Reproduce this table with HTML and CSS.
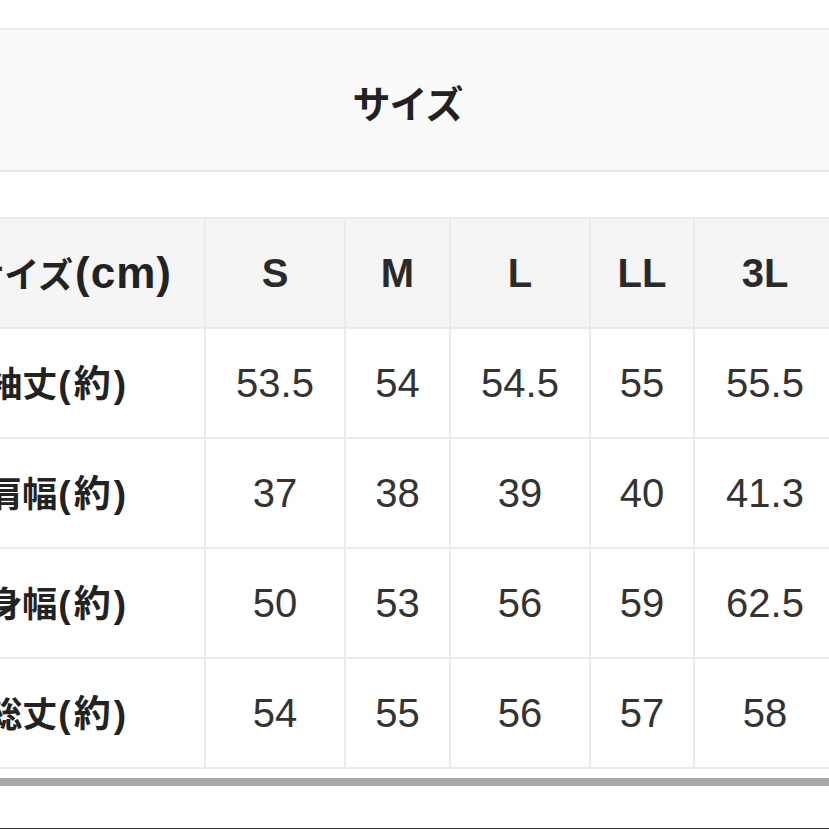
FILE: index.html
```html
<!DOCTYPE html>
<html lang="ja">
<head>
<meta charset="utf-8">
<link rel="stylesheet" href="styles.css">
</head>
<body>
<div class="page">
  <div class="title-box"><h2 class="title">サイズ</h2></div>
  <div class="table-wrap">
    <table class="size-table">
      <thead>
        <tr>
          <th class="label head-label">サイズ<span class="unit-cm">(cm)</span></th>
          <th class="c1">S</th>
          <th class="c2">M</th>
          <th class="c3">L</th>
          <th class="c4">LL</th>
          <th class="c5">3L</th>
        </tr>
      </thead>
      <tbody>
        <tr><th class="label">袖丈<span class="unit">(約)</span></th><td>53.5</td><td>54</td><td>54.5</td><td>55</td><td>55.5</td></tr>
        <tr><th class="label">肩幅<span class="unit">(約)</span></th><td>37</td><td>38</td><td>39</td><td>40</td><td>41.3</td></tr>
        <tr><th class="label">身幅<span class="unit">(約)</span></th><td>50</td><td>53</td><td>56</td><td>59</td><td>62.5</td></tr>
        <tr><th class="label">総丈<span class="unit">(約)</span></th><td>54</td><td>55</td><td>56</td><td>57</td><td>58</td></tr>
      </tbody>
    </table>
  </div>
  <div class="scrollbar"><div class="thumb"></div></div>
  <div class="bottom-line"></div>
</div>
</body>
</html>
```

FILE: styles.css
```css
* { box-sizing: border-box; }
html, body {
  margin: 0;
  padding: 0;
  background: #fff;
}
body {
  width: 829px;
  height: 829px;
  overflow: hidden;
  font-family: "Liberation Sans", "Noto Sans CJK JP", sans-serif;
  color: #2a2a2a;
}
.page {
  display: flex;
  flex-direction: column;
  height: 829px;
}
.title-box {
  margin-top: 28px;
  height: 144px;
  background: #fafafa;
  border-top: 2px solid #ebebeb;
  border-bottom: 2px solid #e8e8e8;
  display: flex;
  align-items: center;
  justify-content: center;
  padding-right: 14px;
  padding-top: 2px;
}
.title {
  margin: 0;
  font-family: "Noto Sans CJK JP", sans-serif;
  font-weight: 700;
  font-size: 38px;
  letter-spacing: -1px;
  color: #222;
}
.table-wrap {
  margin-top: 45px;
  width: 829px;
  overflow: hidden;
}
.size-table {
  margin-left: -95px;
  border-collapse: collapse;
  table-layout: fixed;
  width: 931px;
  border-top: 2px solid #ebebeb;
  border-bottom: 2px solid #ebebeb;
}
.size-table th,
.size-table td {
  height: 110px;
  padding: 0;
  text-align: center;
  vertical-align: middle;
  border-right: 2px solid #ebebeb;
  border-bottom: 2px solid #ebebeb;
  font-size: 40px;
  line-height: 1;
}
.size-table tbody tr:last-child th,
.size-table tbody tr:last-child td { border-bottom: none; }
.size-table thead th {
  background: #f5f5f5;
  font-weight: 700;
}
.size-table td {
  font-weight: 400;
  color: #333;
}
.size-table th.label {
  width: 300px;
  font-family: "Noto Sans CJK JP", sans-serif;
  font-weight: 700;
  font-size: 35px;
  text-align: right;
  padding-right: 78px;
  color: #222;
  white-space: nowrap;
}
.size-table tbody th.label { background: #fff; }
.unit {
  font-family: "Liberation Sans", "Noto Sans CJK JP", sans-serif;
  font-size: 37px;
  letter-spacing: 3px;
  margin-left: 1px;
  margin-right: -3px;
}
.unit-cm {
  font-family: "Liberation Sans", sans-serif;
  font-size: 44px;
  letter-spacing: 1px;
  margin-left: 2px;
  margin-right: -1px;
}
.size-table th.head-label {
  padding-right: 33px;
}
.c1 { width: 140px; }
.c2 { width: 105px; }
.c3 { width: 140px; }
.c4 { width: 104px; }
.c5 { width: 142px; }
.scrollbar {
  margin-top: 9px;
  height: 9px;
  background: #fff;
}
.thumb {
  height: 8px;
  background: #a8a8a8;
}
.bottom-line {
  margin-top: auto;
  height: 1px;
  background: #333;
}
```
